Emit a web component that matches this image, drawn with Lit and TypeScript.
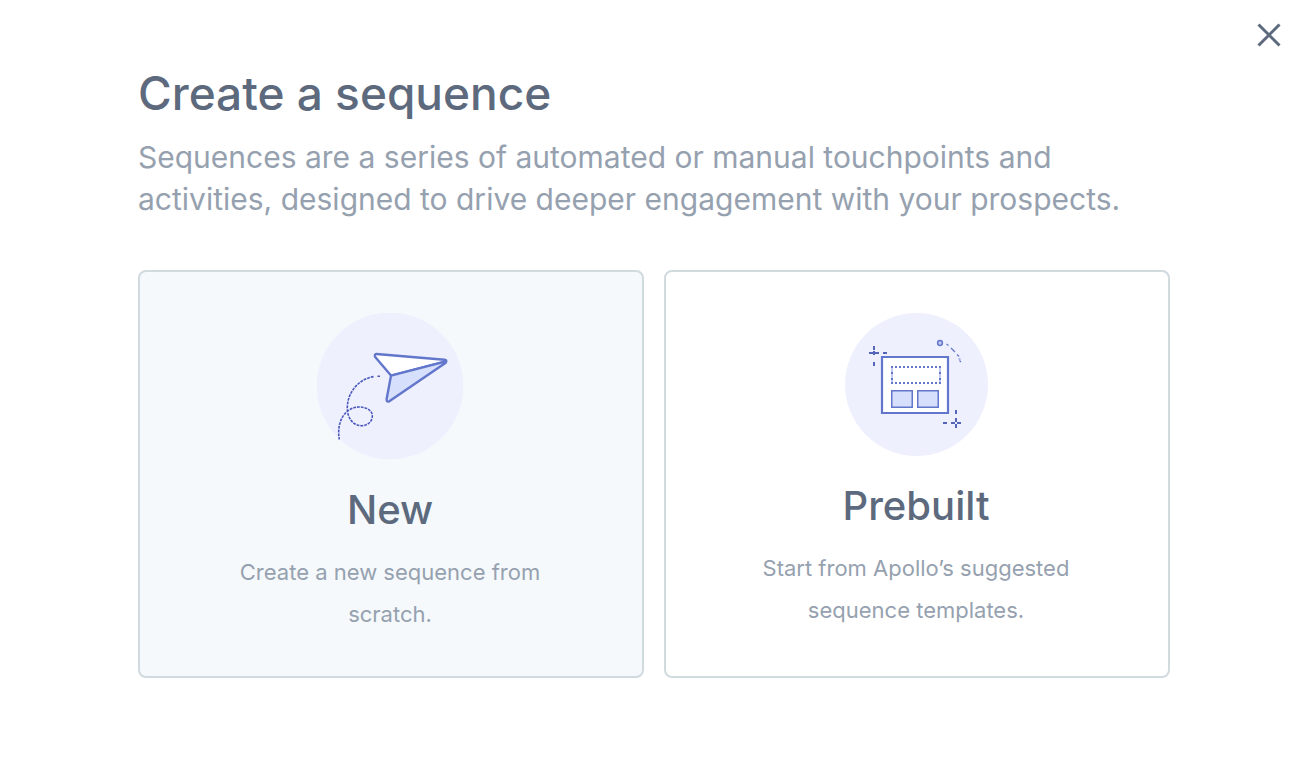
import { LitElement, html, css } from "lit";
import { customElement } from "lit/decorators.js";

const planeArt = html`
  <svg class="art" width="147" height="147" viewBox="0 0 147 147" fill="none" aria-hidden="true">
    <circle cx="73" cy="73" r="73.3" fill="#eff0fe" />
    <g stroke="#6276cb" stroke-width="2.4" stroke-linejoin="round">
      <path fill="#fff" d="M59.5 41 127.5 46.700Q130 47.200 129 48.300L74 62.600 58.2 43.900Q57 41.300 59.5 41Z" />
      <path fill="#d6dffb" d="M74 62.600 129 48.300Q129.600 48.900 128 50.300L72.300 88.300Q69.500 89.500 69.600 86.300Z" />
    </g>
    <path
      stroke="#4a58bd"
      stroke-width="1.600"
      stroke-dasharray="2.800 1"
      d="M63 63.300H60.500M56.500 63.600C42 66 30.300 79 30.300 95C30.300 105 36 112.700 44.700 112.700C51 112.700 55.300 108 55.300 103C55.300 97 49 94 42.300 94C30 94 19 106 22.300 126.500"
    />
  </svg>
`;

const templateArt = html`
  <svg class="art" width="143" height="143" viewBox="0 0 143 143" fill="none" aria-hidden="true">
    <circle cx="71.500" cy="71.500" r="71.500" fill="#eff0fe" />
    <g stroke="#6276cb">
      <path stroke-width="2.200" fill="#fff" d="M37 44H103V100H37Z" />
      <path stroke-width="1.500" fill="#d6dffb" d="M46.750 77.750H67.250V94.250H46.750ZM72.750 77.750H93.250V94.250H72.750Z" />
      <path stroke="#c3c9f1" stroke-width="2" d="M47 54V70M95 54V70" />
      <path stroke-width="2" stroke-dasharray="2 2" d="M46 54H96M46 70H96" />
      <path stroke-width="2" stroke-dasharray="2 4" d="M47 59V67M95 59V67" />
      <circle cx="95" cy="30" r="2.400" stroke-width="1.500" fill="#c3c9f1" />
      <path stroke-width="1.200" d="M101.500 31 103.500 32.500M106 35 110 39M112 41.500 114 43.500M113.500 46H115.500M114.500 47.500 116 49" />
    </g>
    <path
      stroke="#5566b8"
      stroke-width="2"
      d="M29 33V37M29 38V42M29 49V53M24 40H28M30 40H34M38 40H42M111 97V101M111 105V109M111 111V115M98 110H102M106 110H110M112 110H116"
    />
  </svg>
`;

@customElement("app-root")
export class AppRoot extends LitElement {
  static styles = css`
    :host {
      display: block;
      min-height: 100vh;
      box-sizing: border-box;
      position: relative;
      padding: 66px 138px;
      background: #fff;
      color: #5d6a7e;
      font-family: Inter, "Liberation Sans", sans-serif;
    }
    .close {
      position: absolute;
      top: 15px;
      right: 19px;
      display: flex;
      padding: 8px;
      border: 0;
      background: none;
      color: #5d6a7e;
      cursor: pointer;
    }
    .title {
      margin: 0 0 16px;
      font-size: 46px;
      line-height: 54px;
      font-weight: 500;
    }
    .intro {
      margin: 0 0 50px;
      font-size: 30px;
      line-height: 42px;
      color: #96a1af;
    }
    .cards {
      display: grid;
      grid-template-columns: 1fr 1fr;
      gap: 20px;
    }
    .card {
      display: flex;
      flex-direction: column;
      align-items: center;
      justify-content: flex-start;
      padding: 41px 42px 41px 40px;
      border: 2px solid #d1dade;
      border-radius: 8px;
      background: #fff;
      color: inherit;
      font-family: inherit;
      text-align: center;
      cursor: pointer;
    }
    .card.selected {
      background: #f5f9fc;
    }
    .art {
      display: block;
    }
    .name {
      margin-top: 26px;
      font-size: 40px;
      line-height: 48px;
      font-weight: 500;
    }
    .about {
      max-width: 340px;
      margin-top: 17px;
      font-size: 22px;
      line-height: 42px;
      color: #96a1af;
    }
  `;

  render() {
    return html`
      <button class="close" type="button" aria-label="Close">
        <svg width="24" height="24" viewBox="0 0 24 24" fill="none" stroke="currentColor" stroke-width="3" aria-hidden="true">
          <path d="M1.500 1.500 22.500 22.500M22.500 1.500 1.500 22.500" />
        </svg>
      </button>
      <h1 class="title">Create a sequence</h1>
      <p class="intro">
        Sequences are a series of automated or manual touchpoints and activities, designed to drive deeper engagement
        with your prospects.
      </p>
      <div class="cards">
        <button class="card selected" type="button">
          ${planeArt}
          <span class="name">New</span>
          <span class="about">Create a new sequence from scratch.</span>
        </button>
        <button class="card" type="button">
          ${templateArt}
          <span class="name">Prebuilt</span>
          <span class="about">Start from Apollo’s suggested sequence templates.</span>
        </button>
      </div>
    `;
  }
}
